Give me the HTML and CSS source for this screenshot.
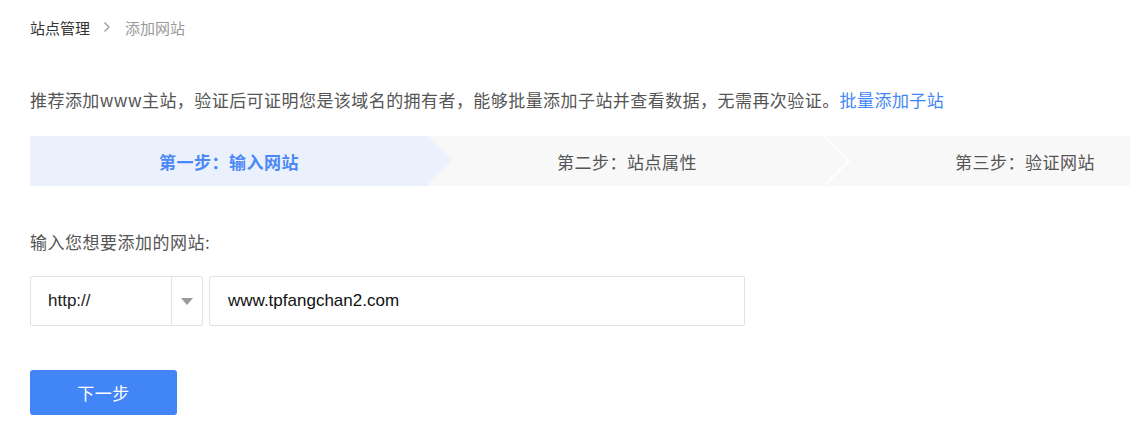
FILE: index.html
```html
<!DOCTYPE html>
<html lang="zh-CN">
<head>
    <meta charset="UTF-8">
    <meta name="viewport" content="width=device-width, initial-scale=1.0">
    <title>添加网站</title>
    <link rel="stylesheet" href="styles.css">
</head>
<body>
    <div class="page">
        <div class="crumbs">
            <a href="#">站点管理</a>
            <svg class="crumb-sep" width="8" height="12" viewBox="0 0 8 12"><path d="M1.5 1.5 L6 6 L1.5 10.5" fill="none" stroke="#999" stroke-width="1.3"/></svg>
            <span>添加网站</span>
        </div>

        <p class="intro">推荐添加www主站，验证后可证明您是该域名的拥有者，能够批量添加子站并查看数据，无需再次验证。<a href="#">批量添加子站</a></p>

        <ol class="steps">
            <li class="active">第一步：输入网站</li>
            <li>第二步：站点属性</li>
            <li>第三步：验证网站</li>
        </ol>

        <label class="field-label" for="site">输入您想要添加的网站:</label>

        <div class="url-row">
            <div class="select">
                <span class="select-value">http://</span>
                <span class="select-caret"></span>
            </div>
            <input class="url" id="site" type="text" value="www.tpfangchan2.com">
        </div>

        <button class="next">下一步</button>
    </div>
</body>
</html>
```

FILE: styles.css
```css
body {
    margin: 0;
    background: #fff;
    overflow: hidden;
    font-family: "Noto Sans CJK SC", "Liberation Sans", sans-serif;
    color: #555;
}

.page {
    padding: 17px 0 0 30px;
}

/* breadcrumb */

.crumbs {
    display: flex;
    align-items: center;
    height: 20px;
    font-size: 15px;
}

.crumbs a {
    color: #333;
    text-decoration: none;
}

.crumb-sep {
    margin: 0 14px 0 13px;
}

.crumbs span {
    color: #999;
}

.intro {
    margin: 51px 0 0 0;
    font-size: 17px;
    line-height: 24px;
    letter-spacing: 0.44px;
    color: #555;
    white-space: nowrap;
}

.intro a {
    color: #3f86f6;
    text-decoration: none;
}

/* steps */

.steps {
    display: flex;
    width: 1100px;
    height: 50px;
    margin: 24px 0 0 0;
    padding: 0;
    list-style: none;
    background: #f8f8f8;
    overflow: hidden;
}

.steps li {
    position: relative;
    flex: 0 0 398px;
    display: flex;
    justify-content: center;
    align-items: center;
    font-size: 17px;
    letter-spacing: 0.5px;
    color: #555;
}

.steps li::after {
    content: "";
    position: absolute;
    z-index: 1;
    top: 7.3px;
    right: -17.7px;
    width: 35.4px;
    height: 35.4px;
    box-sizing: border-box;
    border-top: 2px solid #fff;
    border-right: 2px solid #fff;
    transform: rotate(45deg);
}

.steps li:last-child::after {
    display: none;
}

.steps li.active {
    background: #eaf1fd;
    color: #4a88f6;
    font-weight: bold;
}

.steps li.active::after {
    background: #eaf1fd;
    border-width: 1px;
    border-color: #f4f7fd;
}

/* form */

.field-label {
    display: block;
    margin-top: 44px;
    font-size: 17px;
    line-height: 24px;
    letter-spacing: 0.5px;
    color: #555;
}

.url-row {
    display: flex;
    margin-top: 22px;
    gap: 6px;
}

.select {
    display: flex;
    width: 173px;
    height: 50px;
    box-sizing: border-box;
    border: 1px solid #e3e3e3;
    border-radius: 2px;
}

.select-value {
    flex: 1;
    display: flex;
    align-items: center;
    padding-left: 17px;
    font-family: "Liberation Sans", sans-serif;
    font-size: 17px;
    color: #222;
}

.select-caret {
    width: 30px;
    border-left: 1px solid #e3e3e3;
    display: flex;
    justify-content: center;
    align-items: center;
}

.select-caret::before {
    content: "";
    border-left: 6px solid transparent;
    border-right: 6px solid transparent;
    border-top: 7px solid #999;
}

.url {
    width: 536px;
    height: 50px;
    box-sizing: border-box;
    border: 1px solid #e3e3e3;
    border-radius: 2px;
    padding: 0 18px;
    font-family: "Liberation Sans", sans-serif;
    font-size: 17px;
    color: #111;
    outline: none;
}

.next {
    display: block;
    margin-top: 44px;
    width: 147px;
    height: 45px;
    border: none;
    border-radius: 3px;
    background: #4285f7;
    color: #fff;
    font-family: "Noto Sans CJK SC", sans-serif;
    font-size: 17px;
    letter-spacing: 0.5px;
    cursor: pointer;
}
```
